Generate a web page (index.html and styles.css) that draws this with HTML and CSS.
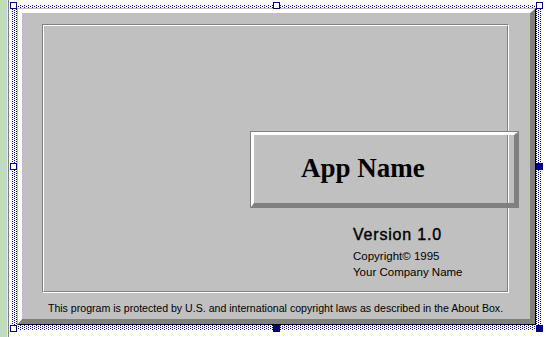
FILE: index.html
```html
<!DOCTYPE html>
<html>

<head>
  <title>About Box</title>
  <link rel="stylesheet" href="styles.css">
</head>

<body>
  <div class="gutter"></div>
  <div class="workspace">
    <div class="selection">
      <div class="dialog">
        <div class="dialog-body">
          <div class="frame">
            <div class="frame-inner">
              <div class="app-box">
                <div class="app-box-inner">App Name</div>
              </div>
              <div class="info">
                <div class="version">Version 1.0</div>
                <div class="small">Copyright© 1995</div>
                <div class="small">Your Company Name</div>
              </div>
            </div>
          </div>
          <p class="notice">This program is protected by U.S. and international copyright laws as described in the About Box.</p>
        </div>
      </div>
      <span class="handle tl"></span>
      <span class="handle tm"></span>
      <span class="handle tr"></span>
      <span class="handle ml"></span>
      <span class="handle mr filled"></span>
      <span class="handle bl"></span>
      <span class="handle bm filled"></span>
      <span class="handle br filled"></span>
    </div>
  </div>
</body>

</html>
```

FILE: styles.css
```css
body {
  margin: 0;
  background-color: #fff;
  font-family: "Liberation Sans", Arial, sans-serif;
  color: #000;
  display: flex;
  min-height: 337px;
}

/* green strip on the left edge */
.gutter {
  width: 7px;
  background-color: #c0dcc0;
  border-right: 1px solid #e8e8e8;
  box-shadow: 1px 0 0 #808080;
  flex-shrink: 0;
}

.workspace {
  padding: 2px 0 0 2px;
}

/* dotted resize frame round the dialog */
.selection {
  position: relative;
  box-sizing: border-box;
  width: 533px;
  height: 330px;
  padding: 6px 7px 7px 7px;
}

.selection::before {
  content: "";
  position: absolute;
  top: 3px;
  left: 2px;
  right: 2px;
  bottom: 2px;
  background-image:
    conic-gradient(at 1px 1px, transparent 75%, #000080 0),
    conic-gradient(at 1px 1px, transparent 75%, #000080 0);
  background-size: 4px 2px;
  background-position: 0 0, 2px 1px;
}

.handle {
  position: absolute;
  box-sizing: border-box;
  width: 7px;
  height: 7px;
  border: 1px solid #000080;
  background-color: #fff;
}

.handle.filled {
  background-color: #000080;
}

.tl { left: 0; top: 0; }
.tm { left: 263px; top: 0; }
.tr { left: 526px; top: 0; }
.ml { left: 0; top: 161px; }
.mr { left: 526px; top: 161px; }
.bl { left: 0; top: 323px; }
.bm { left: 263px; top: 323px; }
.br { left: 526px; top: 323px; }

/* the dialog itself */
.dialog {
  position: relative;
  box-sizing: border-box;
  height: 317px;
  border: 1px solid;
  border-color: #c0c0c0 #000 #000 #c0c0c0;
}

.dialog-body {
  box-sizing: border-box;
  height: 100%;
  background-color: #c0c0c0;
  border-style: solid;
  border-width: 4px 5px 5px 4px;
  border-color: #fff #808080 #808080 #fff;
  padding: 11px 21px 0 20px;
}

.frame {
  border: 1px solid;
  border-color: #808080 #fff #fff #808080;
}

.frame-inner {
  box-sizing: border-box;
  height: 267px;
  border: 1px solid;
  border-color: #fff #808080 #808080 #fff;
  padding-top: 105px;
}

.app-box {
  box-sizing: border-box;
  width: 269px;
  height: 77px;
  margin-left: 206px;
  border: 1px solid #808080;
}

.app-box-inner {
  box-sizing: border-box;
  height: 100%;
  border-style: solid;
  border-width: 3px 4px 4px 3px;
  border-color: #fff #808080 #808080 #fff;
  padding: 18px 0 0 47px;
  font-family: "Liberation Serif", "Times New Roman", serif;
  font-weight: bold;
  font-size: 27px;
  line-height: 30px;
}

.info {
  margin: 18px 0 0 309px;
}

.version {
  font-size: 16px;
  line-height: 18px;
  letter-spacing: 0.8px;
  -webkit-text-stroke: 0.4px #000;
  margin-bottom: 4px;
}

.small {
  font-size: 11.5px;
  line-height: 16px;
}

.notice {
  margin: 9px 0 0;
  font-size: 10.6px;
  line-height: 13px;
  text-align: center;
  white-space: nowrap;
}
```
